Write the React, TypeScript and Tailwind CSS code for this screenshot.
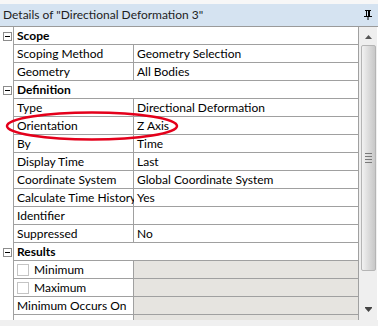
import React from "react";

type Row =
  | { kind: "header"; label: string }
  | { kind: "prop"; label: string; value?: string; check?: boolean; grey?: boolean };

const rows: Row[] = [
  { kind: "header", label: "Scope" },
  { kind: "prop", label: "Scoping Method", value: "Geometry Selection" },
  { kind: "prop", label: "Geometry", value: "All Bodies" },
  { kind: "header", label: "Definition" },
  { kind: "prop", label: "Type", value: "Directional Deformation" },
  { kind: "prop", label: "Orientation", value: "Z Axis" },
  { kind: "prop", label: "By", value: "Time" },
  { kind: "prop", label: "Display Time", value: "Last" },
  { kind: "prop", label: "Coordinate System", value: "Global Coordinate System" },
  { kind: "prop", label: "Calculate Time History", value: "Yes" },
  { kind: "prop", label: "Identifier", value: "" },
  { kind: "prop", label: "Suppressed", value: "No" },
  { kind: "header", label: "Results" },
  { kind: "prop", label: "Minimum", check: true, grey: true },
  { kind: "prop", label: "Maximum", check: true, grey: true },
  { kind: "prop", label: "Minimum Occurs On", grey: true },
  { kind: "prop", label: "", grey: true },
];

function MinusBox() {
  return (
    <div className="w-[9px] h-[9px] border border-[#8c8c8c] bg-white flex items-center justify-center">
      <div className="w-[5px] h-px bg-black" />
    </div>
  );
}

function PropRow({ row }: { row: Row }) {
  if (row.kind === "header") {
    return (
      <div className="flex h-[18px] shrink-0">
        <div className="w-[14px] border-r border-[#a0a0a0] flex items-center pl-[3px]">
          <MinusBox />
        </div>
        <div className="flex-1 border-b border-[#a0a0a0] pl-[3px] font-bold leading-[17px]">{row.label}</div>
      </div>
    );
  }
  return (
    <div className="flex h-[18px] shrink-0">
      <div className="w-[14px] border-r border-[#a0a0a0]" />
      <div className="w-[120px] border-r border-b border-[#a0a0a0] pl-[3px] flex items-center gap-[5px] whitespace-nowrap">
        {row.check && <div className="w-[12px] h-[12px] border border-[#c4c4c4] bg-white shrink-0" />}
        <span className="leading-[17px]">{row.label}</span>
      </div>
      <div
        className={`flex-1 border-b border-[#a0a0a0] pl-[3px] leading-[17px] whitespace-nowrap overflow-hidden ${
          row.grey ? "bg-[#e6e4e0]" : "bg-white"
        }`}
      >
        {row.value}
      </div>
    </div>
  );
}

function Scrollbar() {
  return (
    <div className="w-[19px] bg-[#efefef] border-l border-[#a0a0a0] flex flex-col items-center h-[293px]">
      <div className="h-[18px] flex items-center justify-center pt-[2px]">
        <svg width="7" height="4" viewBox="0 0 7 4">
          <path d="M3.5 0 L7 4 L0 4 Z" fill="#555" />
        </svg>
      </div>
      <div className="w-[15px] h-[226px] rounded-[2px] border border-[#b5b5b5] bg-gradient-to-r from-[#f2f2f2] via-[#dcdcdc] to-[#c8c8c8] flex flex-col items-center justify-center gap-[2px]">
        <div className="w-[7px] h-px bg-[#7a7a7a]" />
        <div className="w-[7px] h-px bg-[#7a7a7a]" />
        <div className="w-[7px] h-px bg-[#7a7a7a]" />
        <div className="w-[7px] h-px bg-[#7a7a7a]" />
      </div>
      <div className="flex-1 flex items-end pb-[8px]">
        <svg width="7" height="5" viewBox="0 0 7 5">
          <path d="M0 0 H7 V1 H0 Z M0 1 L7 1 L3.5 5 Z" fill="#444" />
        </svg>
      </div>
    </div>
  );
}

export default function App() {
  return (
    <div
      className="w-[378px] h-[326px] bg-[#f0f0f0] text-[12px] text-black overflow-hidden relative flex flex-col"
      style={{ fontFamily: 'Lato, "Noto Sans", sans-serif' }}
    >
      <div className="h-[4px] bg-[#f7f7f7] shrink-0" />
      <div className="h-[23px] bg-[#d5e3f1] flex items-center justify-between px-[3px] shrink-0 border-b border-[#9a9a9a]">
        <span className="text-[#1e1e1e] text-[12px]">Details of "Directional Deformation 3"</span>
        <svg width="8" height="10" viewBox="0 0 8 10" className="mr-[3px]">
          <path d="M1 0 H7 V1 H6 V6 H8 V7 H4.5 V10 H3.5 V7 H0 V6 H2 V1 H1 Z M3 1 V6 H4 V1 Z" fill="#000" />
        </svg>
      </div>
      <div className="flex shrink-0 bg-white">
        <div className="w-[358px] flex flex-col h-[293px] overflow-hidden">
          {rows.map((r, i) => (
            <PropRow key={i} row={r} />
          ))}
        </div>
        <Scrollbar />
      </div>
      <svg className="absolute left-0 top-0 pointer-events-none" width="378" height="326">
        <ellipse cx="92" cy="126" rx="85" ry="13.5" fill="none" stroke="#e4001b" strokeWidth="2.5" />
      </svg>
    </div>
  );
}
